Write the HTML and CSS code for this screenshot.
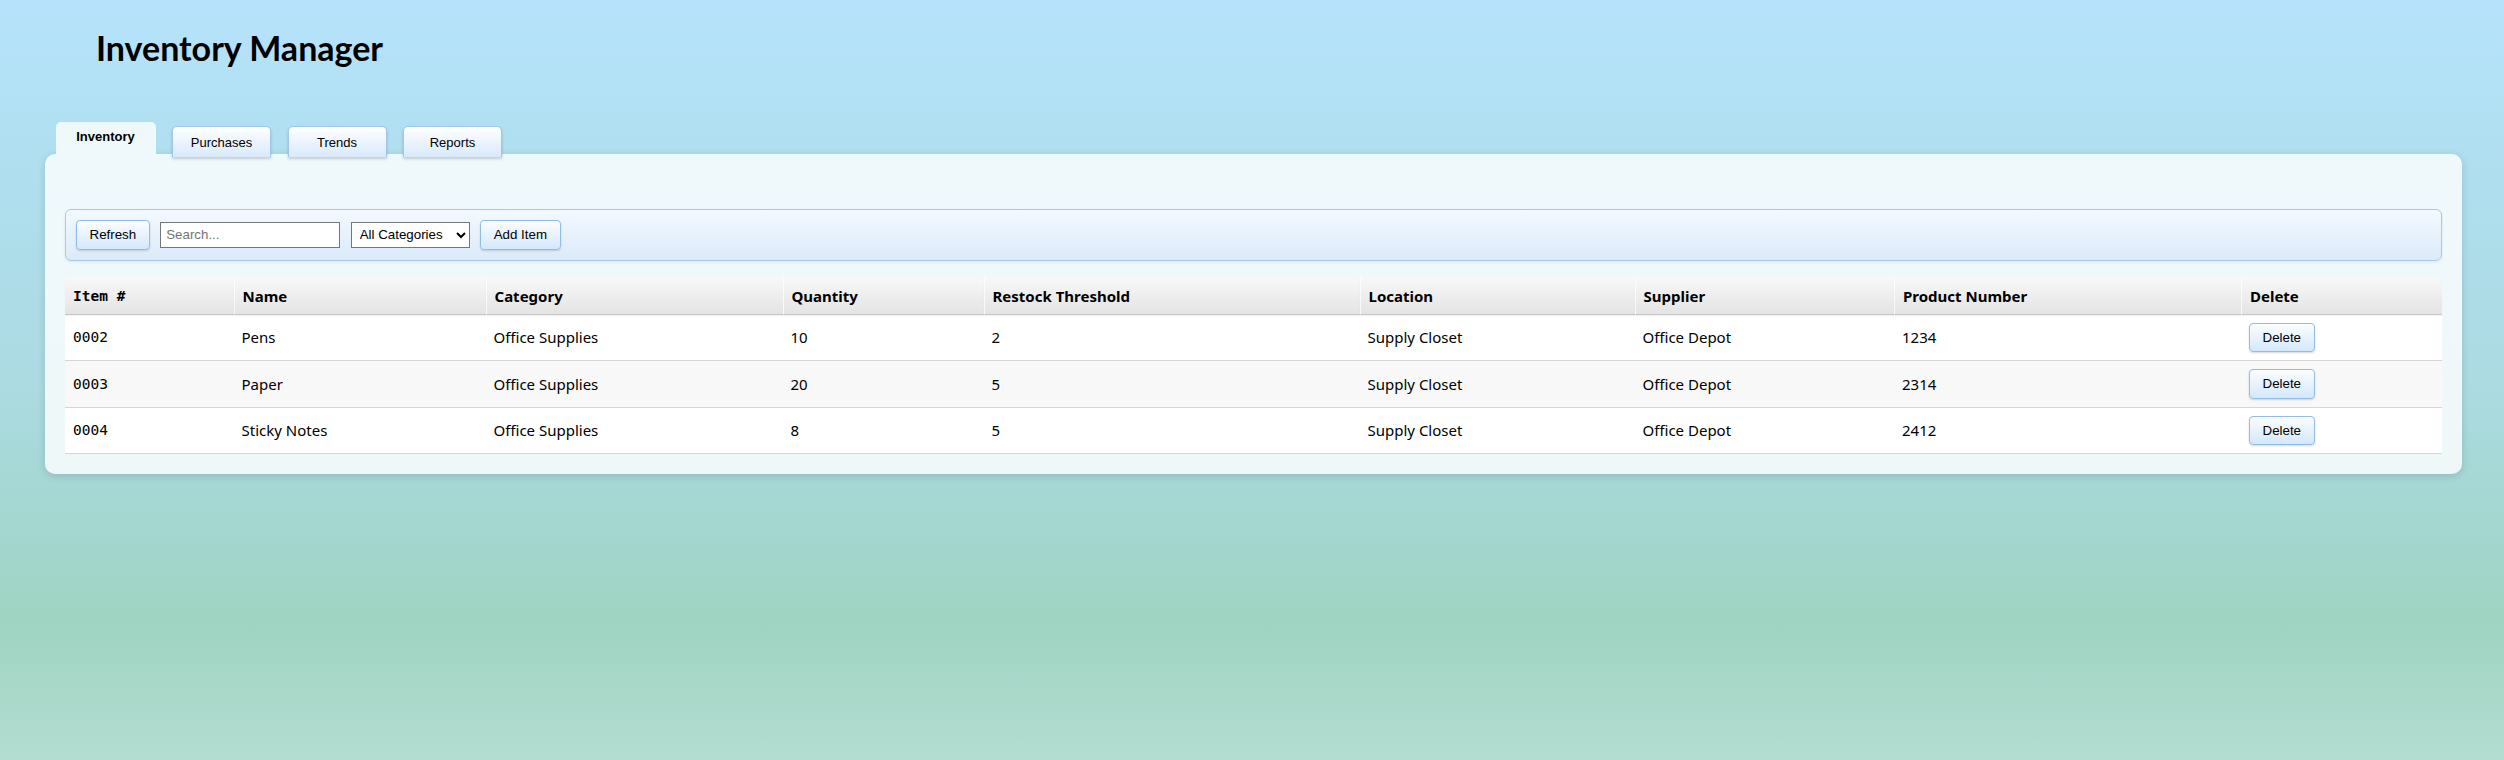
FILE: index.html
```html
<!DOCTYPE html>
<html lang="en">
<head>
<meta charset="utf-8">
<title>Inventory Manager</title>
<link rel="stylesheet" href="styles.css">
</head>
<body>
<div class="app">
  <h1 class="title">Inventory Manager</h1>
  <div class="tabs">
    <div class="tab tab-active">Inventory</div>
    <div class="tab">Purchases</div>
    <div class="tab">Trends</div>
    <div class="tab">Reports</div>
  </div>
  <div class="panel">
    <div class="toolbar">
      <button class="btn">Refresh</button>
      <input class="search" type="text" placeholder="Search...">
      <select class="cat-select">
        <option>All Categories</option>
      </select>
      <button class="btn">Add Item</button>
    </div>
    <table class="grid">
      <colgroup>
        <col class="c-item"><col class="c-name"><col class="c-cat"><col class="c-qty"><col class="c-thr"><col class="c-loc"><col class="c-sup"><col class="c-prod"><col class="c-del">
      </colgroup>
      <thead>
        <tr>
          <th class="mono">Item #</th>
          <th>Name</th>
          <th>Category</th>
          <th>Quantity</th>
          <th>Restock Threshold</th>
          <th>Location</th>
          <th>Supplier</th>
          <th>Product Number</th>
          <th>Delete</th>
        </tr>
      </thead>
      <tbody>
        <tr>
          <td class="mono">0002</td><td>Pens</td><td>Office Supplies</td><td>10</td><td>2</td><td>Supply Closet</td><td>Office Depot</td><td>1234</td><td><button class="btn">Delete</button></td>
        </tr>
        <tr>
          <td class="mono">0003</td><td>Paper</td><td>Office Supplies</td><td>20</td><td>5</td><td>Supply Closet</td><td>Office Depot</td><td>2314</td><td><button class="btn">Delete</button></td>
        </tr>
        <tr>
          <td class="mono">0004</td><td>Sticky Notes</td><td>Office Supplies</td><td>8</td><td>5</td><td>Supply Closet</td><td>Office Depot</td><td>2412</td><td><button class="btn">Delete</button></td>
        </tr>
      </tbody>
    </table>
  </div>
</div>
</body>
</html>
```

FILE: styles.css
```css
* { box-sizing: border-box; }

html, body { height: 100%; }

body {
  margin: 0;
  min-height: 760px;
  background: linear-gradient(180deg, #b6e3fb 0%, #afdeee 25%, #acdbe2 50%, #a3d7cf 70%, #9fd4c2 82%, #b3ddd1 100%);
  font-family: "Noto Sans", "Open Sans", sans-serif;
  color: #000;
}

.app {
  padding: 0 42px 0 45px;
}

.title {
  margin: 0;
  padding: 25px 0 0 51px;
  font-size: 34px;
  line-height: 46px;
  font-weight: 700;
  font-family: Lato, "Noto Sans", sans-serif;
}

.tabs {
  display: flex;
  align-items: flex-end;
  gap: 16.5px;
  margin-top: 51px;
  padding-left: 10.5px;
  margin-bottom: -3px;
  position: relative;
  z-index: 1;
}

.tab {
  width: 99px;
  height: 31px;
  display: flex;
  align-items: center;
  justify-content: center;
  font-family: "Liberation Sans", Arial, sans-serif;
  font-size: 13px;
  color: #000;
  background: linear-gradient(180deg, #ffffff 0%, #d8e9fb 100%);
  border: 1px solid #a3c5e8;
  border-bottom: none;
  border-radius: 5px 5px 0 0;
  box-shadow: 0 2px 3px rgba(0, 0, 0, 0.18);
}

.tab-active {
  width: 100px;
  height: 35px;
  padding-bottom: 6px;
  font-weight: 700;
  background: #eff8fb;
  border: none;
  box-shadow: none;
}

.panel {
  background: rgba(255, 255, 255, 0.8);
  border-radius: 10px;
  padding: 55px 20px 20px;
  box-shadow: 0 2px 8px rgba(0, 0, 0, 0.14);
}

.toolbar {
  display: flex;
  align-items: center;
  gap: 10.5px;
  padding: 10px;
  border: 1px solid #a9c9ea;
  border-radius: 6px;
  background: linear-gradient(180deg, #f4f9ff 0%, #dbeaf9 100%);
  box-shadow: 0 1px 3px rgba(0, 0, 0, 0.08);
  margin-bottom: 16px;
}

.btn {
  font-family: "Liberation Sans", Arial, sans-serif;
  font-size: 13.333px;
  line-height: 15.5px;
  color: #000;
  padding: 6px 12.5px;
  border: 1px solid #93bce4;
  border-radius: 4px;
  background: linear-gradient(180deg, #fbfdff 0%, #d4e8fc 100%);
  box-shadow: 0 1px 2px rgba(0, 0, 0, 0.15);
  cursor: pointer;
}

.search {
  width: 180px;
  height: 26px;
  padding: 4px 5px;
  border: 1px solid #767676;
  border-radius: 0;
  background: #fff;
  font-family: "Liberation Sans", Arial, sans-serif;
  font-size: 13.333px;
}

.search::placeholder { color: #757575; }

.cat-select {
  width: 119px;
  height: 26px;
  padding: 0 4px;
  border: 1px solid #767676;
  border-radius: 0;
  background-color: #fff;
  font-family: "Liberation Sans", Arial, sans-serif;
  font-size: 13.333px;
  color: #000;
}

.grid {
  width: 100%;
  table-layout: fixed;
  border-collapse: separate;
  border-spacing: 0;
  background: #fff;
  border-radius: 4px 4px 0 0;
  font-size: 15px;
}

.c-item { width: 168.5px; }
.c-name { width: 252px; }
.c-cat { width: 297px; }
.c-qty { width: 201px; }
.c-thr { width: 376px; }
.c-loc { width: 275px; }
.c-sup { width: 259.5px; }
.c-prod { width: 347px; }
.c-del { width: 201px; }

.grid th {
  text-align: left;
  font-weight: 700;
  padding: 10px 8px 9px;
  line-height: 18px;
  background: linear-gradient(180deg, #f8f8f8 0%, #e4e4e4 100%);
  border-bottom: 1px solid #c8c8c8;
  border-left: 1px solid rgba(255, 255, 255, 0.75);
  box-shadow: 0 1px 1px rgba(0, 0, 0, 0.06);
}

.grid th:first-child {
  border-left: none;
  border-top-left-radius: 4px;
}

.grid th:last-child { border-top-right-radius: 4px; }

.grid td {
  padding: 8px;
  line-height: 18px;
  height: 46px;
  vertical-align: middle;
  border-bottom: 1px solid #d6d6d6;
}

.grid tbody tr:nth-child(even) td { background: #f8f8f8; }

.mono {
  font-family: "DejaVu Sans Mono", monospace;
  font-size: 14.5px;
}

.grid td .btn {
  padding: 6px 12.5px;
}
```
